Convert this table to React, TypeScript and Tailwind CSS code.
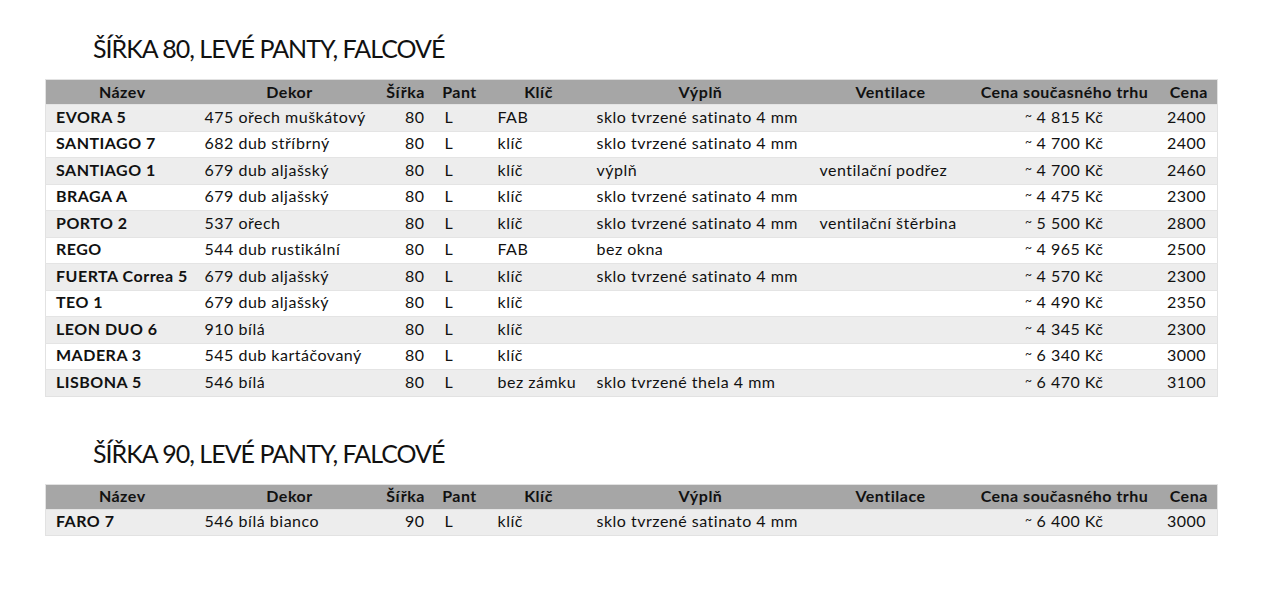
import React from "react";

type Row = {
  name: string;
  dekor: string;
  sirka: string;
  pant: string;
  klic: string;
  vypln: string;
  ventilace: string;
  trh: string;
  cena: string;
};

const rows80: Row[] = [
  { name: "EVORA 5", dekor: "475 ořech muškátový", sirka: "80", pant: "L", klic: "FAB", vypln: "sklo tvrzené satinato 4 mm", ventilace: "", trh: "4 815 Kč", cena: "2400" },
  { name: "SANTIAGO 7", dekor: "682 dub stříbrný", sirka: "80", pant: "L", klic: "klíč", vypln: "sklo tvrzené satinato 4 mm", ventilace: "", trh: "4 700 Kč", cena: "2400" },
  { name: "SANTIAGO 1", dekor: "679 dub aljašský", sirka: "80", pant: "L", klic: "klíč", vypln: "výplň", ventilace: "ventilační podřez", trh: "4 700 Kč", cena: "2460" },
  { name: "BRAGA A", dekor: "679 dub aljašský", sirka: "80", pant: "L", klic: "klíč", vypln: "sklo tvrzené satinato 4 mm", ventilace: "", trh: "4 475 Kč", cena: "2300" },
  { name: "PORTO 2", dekor: "537 ořech", sirka: "80", pant: "L", klic: "klíč", vypln: "sklo tvrzené satinato 4 mm", ventilace: "ventilační štěrbina", trh: "5 500 Kč", cena: "2800" },
  { name: "REGO", dekor: "544 dub rustikální", sirka: "80", pant: "L", klic: "FAB", vypln: "bez okna", ventilace: "", trh: "4 965 Kč", cena: "2500" },
  { name: "FUERTA Correa 5", dekor: "679 dub aljašský", sirka: "80", pant: "L", klic: "klíč", vypln: "sklo tvrzené satinato 4 mm", ventilace: "", trh: "4 570 Kč", cena: "2300" },
  { name: "TEO 1", dekor: "679 dub aljašský", sirka: "80", pant: "L", klic: "klíč", vypln: "", ventilace: "", trh: "4 490 Kč", cena: "2350" },
  { name: "LEON DUO 6", dekor: "910 bílá", sirka: "80", pant: "L", klic: "klíč", vypln: "", ventilace: "", trh: "4 345 Kč", cena: "2300" },
  { name: "MADERA 3", dekor: "545 dub kartáčovaný", sirka: "80", pant: "L", klic: "klíč", vypln: "", ventilace: "", trh: "6 340 Kč", cena: "3000" },
  { name: "LISBONA 5", dekor: "546 bílá", sirka: "80", pant: "L", klic: "bez zámku", vypln: "sklo tvrzené thela 4 mm", ventilace: "", trh: "6 470 Kč", cena: "3100" },
];

const rows90: Row[] = [
  { name: "FARO 7", dekor: "546 bílá bianco", sirka: "90", pant: "L", klic: "klíč", vypln: "sklo tvrzené satinato 4 mm", ventilace: "", trh: "6 400 Kč", cena: "3000" },
];

const DoorTable = ({ rows }: { rows: Row[] }) => {
  return (
    <table className="table-fixed border-collapse w-[1172px] border border-[#e2e2e2] text-[16px] tracking-[0.5px] text-[#111]">
      <colgroup>
        <col className="w-[153px]" />
        <col className="w-[182px]" />
        <col className="w-[50px]" />
        <col className="w-[58px]" />
        <col className="w-[100px]" />
        <col className="w-[224px]" />
        <col className="w-[156px]" />
        <col className="w-[192px]" />
        <col className="w-[57px]" />
      </colgroup>
      <thead>
        <tr className="bg-[#a6a6a6] h-[25px] font-bold leading-[18px]">
          <th className="text-center pb-[1px]">Název</th>
          <th className="text-center pb-[1px]">Dekor</th>
          <th className="text-center pb-[1px]">Šířka</th>
          <th className="text-center pb-[1px]">Pant</th>
          <th className="text-center pb-[1px]">Klíč</th>
          <th className="text-center pb-[1px]">Výplň</th>
          <th className="text-center pb-[1px]">Ventilace</th>
          <th className="text-center pb-[1px]">Cena současného trhu</th>
          <th className="text-center pb-[1px]">Cena</th>
        </tr>
      </thead>
      <tbody className="leading-[18px]">
        {rows.map((r, i) => (
          <tr key={r.name} className={`h-[26.5px] border-t border-[#e4e4e4] ${i % 2 === 0 ? "bg-[#ededed]" : "bg-white"}`}>
            <td className="pl-[10px] pb-[2px] font-bold whitespace-nowrap">{r.name}</td>
            <td className="pl-[6px] pb-[2px] whitespace-nowrap">{r.dekor}</td>
            <td className="pr-[6px] pb-[2px] text-right">{r.sirka}</td>
            <td className="pl-[14px] pb-[2px]">{r.pant}</td>
            <td className="pl-[9px] pb-[2px] whitespace-nowrap">{r.klic}</td>
            <td className="pl-[8px] pb-[2px] whitespace-nowrap">{r.vypln}</td>
            <td className="pl-[7px] pb-[2px] whitespace-nowrap">{r.ventilace}</td>
            <td className="pr-[57px] pb-[2px] text-right whitespace-nowrap">
              <span className="relative -top-[3px] text-[12px] leading-[10px] mr-[4px]">~</span>
              {r.trh}
            </td>
            <td className="pr-[11px] pb-[2px] text-right">{r.cena}</td>
          </tr>
        ))}
      </tbody>
    </table>
  );
};

export default function App() {
  return (
    <div className="w-[1268px] h-[600px] bg-white pl-[45px] pt-[30px] font-['Lato',_'Open_Sans',_sans-serif]">
      <h2 className="pl-[48px] text-[25px] tracking-[-1px] leading-[36px] text-[#111] mb-[13px]">ŠÍŘKA 80, LEVÉ PANTY, FALCOVÉ</h2>
      <DoorTable rows={rows80} />
      <h2 className="pl-[48px] text-[25px] tracking-[-1px] leading-[36px] text-[#111] mt-[38px] mb-[13px]">ŠÍŘKA 90, LEVÉ PANTY, FALCOVÉ</h2>
      <DoorTable rows={rows90} />
    </div>
  );
}
